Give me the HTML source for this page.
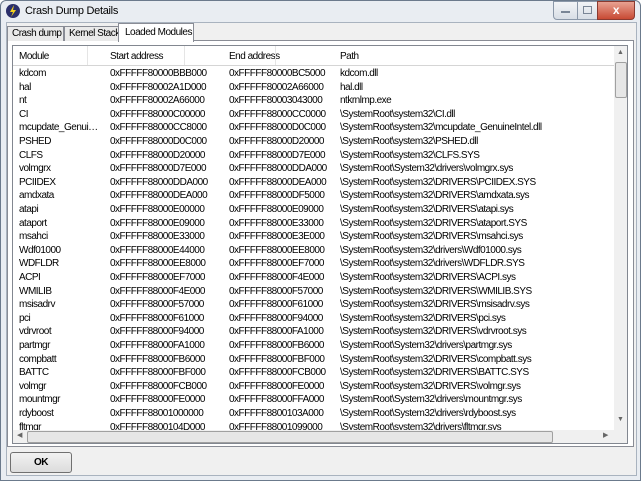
<html><head><style>
body{margin:0;width:641px;height:481px;overflow:hidden;background:#fff;font-family:"Liberation Sans",sans-serif;font-size:10px;letter-spacing:-0.5px;color:#000;position:relative}
.a{position:absolute}
.frame{left:0;top:0;width:639px;height:479px;border:1px solid #6b7a8c;background:#e9edf2;border-radius:6px 6px 0 0}
.client{left:6px;top:22px;width:629px;height:452px;background:#f0f0f0;border:1px solid #a9b3bf}
.tab{position:absolute;border:1px solid #898c95;border-bottom:none;background:#eaeaea;padding:0 4px;line-height:14px;height:14px;white-space:nowrap}
.row{position:absolute;left:0;height:13px;line-height:13px;white-space:nowrap}
.row span{position:absolute}
.row span.m{width:82px;overflow:hidden;text-overflow:ellipsis}
</style></head><body>
<div class="a frame"></div>
<svg class="a" style="left:5px;top:3px" width="16" height="16"><circle cx="8" cy="8" r="7" fill="#2b2f6a"/><path d="M9 2 L5 9 L8 9 L6 14 L11 7 L8 7 Z" fill="#f4d21c"/></svg>
<div class="a" style="left:25px;top:5px;font-size:11px;letter-spacing:-0.3px">Crash Dump Details</div>
<div class="a" style="left:553px;top:1px;width:23px;height:17px;border:1px solid #8a97a8;border-radius:0 0 0 4px;background:linear-gradient(#f2f4f7,#d8dee6)"><div class="a" style="left:7px;top:9px;width:9px;height:2px;background:#7a8696"></div></div>
<div class="a" style="left:577px;top:1px;width:19px;height:17px;border:1px solid #8a97a8;background:linear-gradient(#f2f4f7,#d8dee6)"><div class="a" style="left:5px;top:4px;width:7px;height:6px;border:1px solid #7a8696"></div></div>
<div class="a" style="left:597px;top:1px;width:36px;height:17px;border:1px solid #8a3a30;border-radius:0 0 4px 0;background:linear-gradient(#e8a292,#c84a34);color:#fff;font-weight:bold;text-align:center;line-height:16px;font-size:12px">x</div>
<div class="a client"></div>
<div class="a" style="left:7px;top:40px;width:625px;height:405px;border:1px solid #898c95;background:#fff"></div>
<div class="tab" style="left:7px;top:26px;width:47px">Crash dump</div>
<div class="tab" style="left:64px;top:26px;width:46px">Kernel Stack</div>
<div class="tab" style="left:118px;top:23px;height:18px;line-height:17px;background:#fff;padding:0 6px;width:62px">Loaded Modules</div>
<div class="a" style="left:12px;top:45px;width:614px;height:397px;border:1px solid #828790;background:#fff;overflow:hidden">
<div class="a" style="left:0;top:0;width:601px;height:19px;border-bottom:1px solid #d5d5d5;background:#fff">
<span class="a" style="left:6px;top:5px">Module</span><span class="a" style="left:97px;top:5px">Start address</span><span class="a" style="left:216px;top:5px">End address</span><span class="a" style="left:327px;top:5px">Path</span>
<div class="a" style="left:74px;top:0;width:1px;height:19px;background:#e5e5e5"></div><div class="a" style="left:171px;top:0;width:1px;height:19px;background:#e5e5e5"></div><div class="a" style="left:262px;top:0;width:1px;height:19px;background:#e5e5e5"></div>
</div>
<div id="rows" class="a" style="left:0;top:21px;width:601px;height:363px;overflow:hidden">
</div>
<div class="a" style="left:601px;top:0;width:13px;height:384px;background:#f0f0f0"><div class="a" style="left:1px;top:16px;width:10px;height:34px;border:1px solid #a0a0a0;border-radius:2px;background:#e6e6e6"></div><div class="a" style="left:3px;top:3px;font-size:7px;color:#666">▲</div><div class="a" style="left:3px;top:370px;font-size:7px;color:#666">▼</div></div>
<div class="a" style="left:0;top:384px;width:614px;height:13px;background:#f0f0f0"><div class="a" style="left:14px;top:1px;width:524px;height:10px;border:1px solid #a0a0a0;border-radius:2px;background:#e6e6e6"></div><div class="a" style="left:4px;top:1px;font-size:7px;color:#666">◀</div><div class="a" style="left:590px;top:1px;font-size:7px;color:#666">▶</div></div>
</div>
<div class="a" style="left:10px;top:452px;width:60px;height:19px;border:1px solid #707070;border-radius:3px;background:linear-gradient(#f2f2f2,#dcdcdc);text-align:center;line-height:19px;font-weight:bold">OK</div>
<script>
var d=[["kdcom","0xFFFFF80000BBB000","0xFFFFF80000BC5000","kdcom.dll"],["hal","0xFFFFF80002A1D000","0xFFFFF80002A66000","hal.dll"],["nt","0xFFFFF80002A66000","0xFFFFF80003043000","ntkrnlmp.exe"],["CI","0xFFFFF88000C00000","0xFFFFF88000CC0000","\\SystemRoot\\system32\\CI.dll"],["mcupdate_GenuineIntel","0xFFFFF88000CC8000","0xFFFFF88000D0C000","\\SystemRoot\\system32\\mcupdate_GenuineIntel.dll"],["PSHED","0xFFFFF88000D0C000","0xFFFFF88000D20000","\\SystemRoot\\system32\\PSHED.dll"],["CLFS","0xFFFFF88000D20000","0xFFFFF88000D7E000","\\SystemRoot\\system32\\CLFS.SYS"],["volmgrx","0xFFFFF88000D7E000","0xFFFFF88000DDA000","\\SystemRoot\\System32\\drivers\\volmgrx.sys"],["PCIIDEX","0xFFFFF88000DDA000","0xFFFFF88000DEA000","\\SystemRoot\\system32\\DRIVERS\\PCIIDEX.SYS"],["amdxata","0xFFFFF88000DEA000","0xFFFFF88000DF5000","\\SystemRoot\\system32\\DRIVERS\\amdxata.sys"],["atapi","0xFFFFF88000E00000","0xFFFFF88000E09000","\\SystemRoot\\system32\\DRIVERS\\atapi.sys"],["ataport","0xFFFFF88000E09000","0xFFFFF88000E33000","\\SystemRoot\\system32\\DRIVERS\\ataport.SYS"],["msahci","0xFFFFF88000E33000","0xFFFFF88000E3E000","\\SystemRoot\\system32\\DRIVERS\\msahci.sys"],["Wdf01000","0xFFFFF88000E44000","0xFFFFF88000EE8000","\\SystemRoot\\system32\\drivers\\Wdf01000.sys"],["WDFLDR","0xFFFFF88000EE8000","0xFFFFF88000EF7000","\\SystemRoot\\system32\\drivers\\WDFLDR.SYS"],["ACPI","0xFFFFF88000EF7000","0xFFFFF88000F4E000","\\SystemRoot\\system32\\DRIVERS\\ACPI.sys"],["WMILIB","0xFFFFF88000F4E000","0xFFFFF88000F57000","\\SystemRoot\\system32\\DRIVERS\\WMILIB.SYS"],["msisadrv","0xFFFFF88000F57000","0xFFFFF88000F61000","\\SystemRoot\\system32\\DRIVERS\\msisadrv.sys"],["pci","0xFFFFF88000F61000","0xFFFFF88000F94000","\\SystemRoot\\system32\\DRIVERS\\pci.sys"],["vdrvroot","0xFFFFF88000F94000","0xFFFFF88000FA1000","\\SystemRoot\\system32\\DRIVERS\\vdrvroot.sys"],["partmgr","0xFFFFF88000FA1000","0xFFFFF88000FB6000","\\SystemRoot\\System32\\drivers\\partmgr.sys"],["compbatt","0xFFFFF88000FB6000","0xFFFFF88000FBF000","\\SystemRoot\\system32\\DRIVERS\\compbatt.sys"],["BATTC","0xFFFFF88000FBF000","0xFFFFF88000FCB000","\\SystemRoot\\system32\\DRIVERS\\BATTC.SYS"],["volmgr","0xFFFFF88000FCB000","0xFFFFF88000FE0000","\\SystemRoot\\system32\\DRIVERS\\volmgr.sys"],["mountmgr","0xFFFFF88000FE0000","0xFFFFF88000FFA000","\\SystemRoot\\System32\\drivers\\mountmgr.sys"],["rdyboost","0xFFFFF88001000000","0xFFFFF8800103A000","\\SystemRoot\\System32\\drivers\\rdyboost.sys"],["fltmgr","0xFFFFF8800104D000","0xFFFFF88001099000","\\SystemRoot\\system32\\drivers\\fltmgr.sys"]];
var h="";d.forEach(function(r,i){h+='<div class="row" style="top:'+(i*13.6)+'px"><span class="m" style="left:6px">'+r[0]+'</span><span style="left:97px">'+r[1]+'</span><span style="left:216px">'+r[2]+'</span><span style="left:327px">'+r[3]+'</span></div>';});
document.getElementById("rows").innerHTML=h;
</script>
</body></html>
